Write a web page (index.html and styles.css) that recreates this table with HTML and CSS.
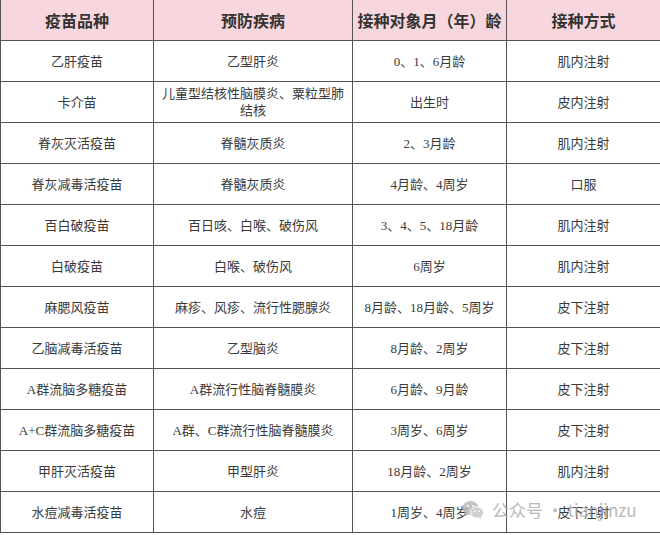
FILE: index.html
```html
<!DOCTYPE html>
<html lang="zh">
<head>
<meta charset="utf-8">
<link rel="stylesheet" href="styles.css">
</head>
<body>
<div class="wrap">
<table class="vac">
<colgroup><col class="c1"><col class="c2"><col class="c3"><col class="c4"></colgroup>
<thead>
<tr><th>疫苗品种</th><th>预防疾病</th><th>接种对象月（年）龄</th><th>接种方式</th></tr>
</thead>
<tbody>
<tr><td>乙肝疫苗</td><td>乙型肝炎</td><td>0、1、6月龄</td><td>肌内注射</td></tr>
<tr><td>卡介苗</td><td class="tight">儿童型结核性脑膜炎、粟粒型肺结核</td><td>出生时</td><td>皮内注射</td></tr>
<tr><td>脊灰灭活疫苗</td><td>脊髓灰质炎</td><td>2、3月龄</td><td>肌内注射</td></tr>
<tr><td>脊灰减毒活疫苗</td><td>脊髓灰质炎</td><td>4月龄、4周岁</td><td>口服</td></tr>
<tr><td>百白破疫苗</td><td>百日咳、白喉、破伤风</td><td>3、4、5、18月龄</td><td>肌内注射</td></tr>
<tr><td>白破疫苗</td><td>白喉、破伤风</td><td>6周岁</td><td>肌内注射</td></tr>
<tr><td>麻腮风疫苗</td><td>麻疹、风疹、流行性腮腺炎</td><td>8月龄、18月龄、5周岁</td><td>皮下注射</td></tr>
<tr><td>乙脑减毒活疫苗</td><td>乙型脑炎</td><td>8月龄、2周岁</td><td>皮下注射</td></tr>
<tr><td>A群流脑多糖疫苗</td><td>A群流行性脑脊髓膜炎</td><td>6月龄、9月龄</td><td>皮下注射</td></tr>
<tr><td>A+C群流脑多糖疫苗</td><td>A群、C群流行性脑脊髓膜炎</td><td>3周岁、6周岁</td><td>皮下注射</td></tr>
<tr><td>甲肝灭活疫苗</td><td>甲型肝炎</td><td>18月龄、2周岁</td><td>肌内注射</td></tr>
<tr><td>水痘减毒活疫苗</td><td>水痘</td><td>1周岁、4周岁</td><td>皮下注射</td></tr>
</tbody>
</table>
<div class="mark">
<svg class="wx" width="22" height="20" viewBox="0 0 22 20">
<ellipse cx="8.5" cy="8" rx="8" ry="7" fill="#b4b4b4"/>
<path d="M3.5 13 L2.5 16.5 L6.5 14.2 Z" fill="#b4b4b4"/>
<ellipse cx="15" cy="12.5" rx="6.5" ry="5.6" fill="#c4c4c4" stroke="#fff" stroke-width="1"/>
<path d="M18.5 16.5 L19.5 19 L16.5 17.6 Z" fill="#c4c4c4"/>
<circle cx="5.8" cy="6" r="1.1" fill="#fff"/>
<circle cx="11.2" cy="6" r="1.1" fill="#fff"/>
<circle cx="12.8" cy="11.2" r="0.9" fill="#fff"/>
<circle cx="17.2" cy="11.2" r="0.9" fill="#fff"/>
</svg>
<span class="mtext">公众号 · tianjinzu</span>
</div>
</div>
</body>
</html>
```
FILE: styles.css
```css
html, body {
  margin: 0;
  padding: 0;
  background: #ffffff;
}
.wrap {
  position: relative;
  width: 660px;
  height: 535px;
  overflow: hidden;
}
.vac {
  width: 660px;
  table-layout: fixed;
  border-collapse: collapse;
  font-family: "Liberation Serif", "Noto Sans CJK SC", serif;
  color: #3a3a3a;
}
.c1 { width: 153px; }
.c2 { width: 199px; }
.c3 { width: 154px; }
.c4 { width: 154px; }
.vac th, .vac td {
  border: 1px solid #5a5252;
  text-align: center;
  vertical-align: middle;
  padding: 0 8px;
}
.vac th {
  border-top: 0 none;
  background: #f8d6dd;
  font-size: 16px;
  font-weight: bold;
  color: #333333;
  height: 40px;
  padding: 0 2px;
  white-space: nowrap;
}
.vac td {
  font-size: 13px;
  height: 40px;
  line-height: 17px;
}
.vac td.tight {
  padding: 0 6px;
}
.mark {
  position: absolute;
  left: 462px;
  top: 499px;
  display: flex;
  align-items: center;
  gap: 8px;
  white-space: nowrap;
  opacity: 0.8;
}
.mtext {
  font-family: "Noto Sans CJK SC", "Noto Sans", sans-serif;
  font-size: 17px;
  color: #a8a8a8;
  line-height: 22px;
}
```
